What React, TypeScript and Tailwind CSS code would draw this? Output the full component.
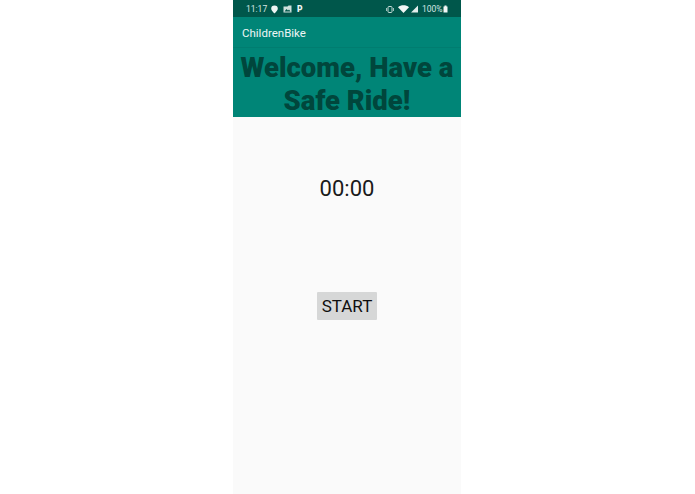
export default function App() {
  return (
    <div className="w-[694px] h-[494px] flex justify-center font-['Roboto',sans-serif] overflow-hidden">
      <div className="w-[228px] h-[494px] bg-[#fafafa] flex flex-col items-center">
        <div className="w-full h-[17px] bg-[#00574b] flex items-center justify-between pl-[13px] pr-[13px] pt-[1px] text-[8.500px] text-[#d5e6e3]">
          <div className="flex items-center">
            <span className="w-[20px] mr-[5px]">11:17</span>
            <svg width="7" height="9" viewBox="0 0 7 9" className="mr-[5px]"><path d="M3.500 0.500a3.300 3.300 0 0 1 3.300 3.300C6.800 5.800 3.500 8.500 3.500 8.500S0.200 5.800 0.200 3.800A3.300 3.300 0 0 1 3.500 0.500z" fill="#eef5f4" /></svg>
            <svg width="9" height="8" viewBox="0 0 9 8" className="mr-[5px]"><path d="M0.500 1.500h4l1-1h3v7h-8z" fill="#cfe0dd" /><path d="M1.500 6.500l2-2.500 1.500 1.500 1-1 1.500 2z" fill="#00574b" /></svg>
            <span className="font-black text-[8.500px] leading-[9px] text-[#eef5f4]">P</span>
          </div>
          <div className="flex items-center">
            <svg width="8" height="9" viewBox="0 0 8 9" className="mr-[4px]"><rect x="2" y="1.500" width="4" height="6" rx="1" fill="none" stroke="#c5dbd7" strokeWidth="1" /><path d="M0.500 3v3M7.500 3v3" stroke="#c5dbd7" strokeWidth="0.800" /></svg>
            <svg width="11" height="8" viewBox="0 0 11 8" className="mr-[1px]"><path d="M0 2.200C3 -0.400 8 -0.400 11 2.200L5.500 8z" fill="#f2f7f6" /></svg>
            <svg width="9" height="8" viewBox="0 0 9 8" className="mr-[3px]"><path d="M8 0.500V7.500H1z" fill="#e3eeec" /></svg>
            <span className="w-[19px] whitespace-nowrap">100%</span>
            <svg width="5" height="8" viewBox="0 0 5 8" className="ml-[2px]"><path d="M1.500 0.500h2v1h1v6h-4v-6h1z" fill="#f2f7f6" /></svg>
          </div>
        </div>
        <div className="w-full h-[31px] bg-[#008577] flex items-center pl-[9px] pt-[3px] text-[11.500px] text-[#eef6f5] border-b border-[#007d70]">
          ChildrenBike
        </div>
        <div className="w-full h-[69px] bg-[#008577] flex items-center justify-center text-center text-[27.500px] leading-[33px] font-black text-[#00463c] pt-[3px] whitespace-nowrap">
          <span>Welcome, Have a<br />Safe Ride!</span>
        </div>
        <div className="mt-[58px] text-[22px] leading-[27px] text-[#1a1a1a]">00:00</div>
        <div className="mt-[90px] w-[60px] h-[28px] bg-[#d6d7d7] rounded-[1px] flex items-center justify-center pt-[2px] text-[17px] text-[#0f0f0f]">
          <span>START</span>
        </div>
      </div>
    </div>
  );
}
